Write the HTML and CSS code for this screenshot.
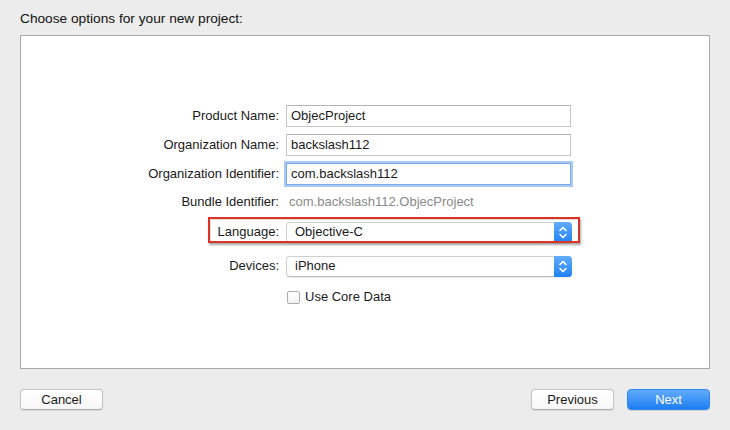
FILE: index.html
```html
<!DOCTYPE html>
<html>
<head>
<meta charset="utf-8">
<link rel="stylesheet" href="styles.css">
</head>
<body>
<div class="sheet">
  <div class="title">Choose options for your new project:</div>
  <div class="panel">
    <div class="form">
      <div class="row r-first">
        <div class="label">Product Name:</div>
        <div class="field">ObjecProject</div>
      </div>
      <div class="row r-text">
        <div class="label">Organization Name:</div>
        <div class="field">backslash112</div>
      </div>
      <div class="row r-text">
        <div class="label">Organization Identifier:</div>
        <div class="field focused">com.backslash112</div>
      </div>
      <div class="row r-bundle">
        <div class="label">Bundle Identifier:</div>
        <div class="static">com.backslash112.ObjecProject</div>
      </div>
      <div class="row r-lang highlight">
        <div class="label">Language:</div>
        <div class="popup">
          <span class="popup-text">Objective-C</span>
          <span class="stepper"><svg width="18" height="21" viewBox="0 0 18 21"><path d="M6 8.5 L9 5.5 L12 8.5" fill="none" stroke="#fff" stroke-width="1.6" stroke-linecap="round" stroke-linejoin="round"/><path d="M6 12.5 L9 15.5 L12 12.5" fill="none" stroke="#fff" stroke-width="1.6" stroke-linecap="round" stroke-linejoin="round"/></svg></span>
        </div>
      </div>
      <div class="row r-dev">
        <div class="label">Devices:</div>
        <div class="popup">
          <span class="popup-text">iPhone</span>
          <span class="stepper"><svg width="18" height="21" viewBox="0 0 18 21"><path d="M6 8.5 L9 5.5 L12 8.5" fill="none" stroke="#fff" stroke-width="1.6" stroke-linecap="round" stroke-linejoin="round"/><path d="M6 12.5 L9 15.5 L12 12.5" fill="none" stroke="#fff" stroke-width="1.6" stroke-linecap="round" stroke-linejoin="round"/></svg></span>
        </div>
      </div>
      <div class="row r-check">
        <div class="label"></div>
        <div class="check"><span class="box"></span><span>Use Core Data</span></div>
      </div>
    </div>
  </div>
  <div class="footer">
    <div class="btn">Cancel</div>
    <div class="right">
      <div class="btn">Previous</div>
      <div class="btn primary">Next</div>
    </div>
  </div>
</div>
</body>
</html>
```
FILE: styles.css
```css
html, body {
  margin: 0;
  padding: 0;
  background: #ececec;
}
body {
  width: 730px;
  height: 430px;
  overflow: hidden;
  font-family: "Liberation Sans", Arial, sans-serif;
  font-size: 13px;
  color: #1a1a1a;
}
.sheet {
  padding: 11px 20px 0 20px;
}
.title {
  font-size: 13.7px;
  line-height: 16px;
  height: 16px;
  margin-bottom: 8px;
  color: #111;
}
.panel {
  box-sizing: border-box;
  width: 690px;
  height: 334px;
  background: #fff;
  border: 1px solid #a9a9a9;
  padding-top: 69px;
}
.form {
  display: flex;
  flex-direction: column;
}
.row {
  display: grid;
  grid-template-columns: 258px 286px;
  column-gap: 7px;
  align-items: center;
  position: relative;
}
.label {
  text-align: right;
  color: #1a1a1a;
  line-height: 16px;
}
.r-first { height: 22px; }
.r-text { height: 22px; margin-top: 7px; }
.r-bundle { height: 18px; margin-top: 8px; }
.r-lang { height: 22px; margin-top: 10px; }
.r-dev { height: 22px; margin-top: 12px; }
.r-check { height: 14px; margin-top: 12px; }

.field {
  box-sizing: border-box;
  height: 22px;
  border: 1px solid #c6c6c6;
  border-top-color: #b5b5b5;
  background: #fff;
  padding: 0 4px;
  line-height: 20px;
  color: #1a1a1a;
  width: 285px;
}
.field.focused {
  border-color: #7aa8e4;
  box-shadow: 0 0 0 2px #a9c9f1;
}
.static {
  color: #8a8a8a;
  padding-left: 3px;
  line-height: 16px;
}
.popup {
  box-sizing: border-box;
  height: 21px;
  width: 286px;
  border: 1px solid #cfcfcf;
  border-bottom-color: #b9b9b9;
  border-radius: 4px;
  background: #fff;
  display: flex;
  align-items: center;
  justify-content: space-between;
  box-shadow: 0 0.5px 1px rgba(0,0,0,0.08);
}
.popup-text {
  padding-left: 8px;
  line-height: 16px;
  color: #1a1a1a;
}
.stepper {
  width: 18px;
  height: 21px;
  margin: -1px -1px -1px 0;
  border-radius: 0 4px 4px 0;
  background: linear-gradient(#63adfc, #1f80f3);
  display: flex;
}
.highlight::before {
  content: "";
  position: absolute;
  left: 187px;
  top: -4px;
  width: 368px;
  height: 22px;
  border: 2px solid #db3325;
  box-shadow: 1px 2px 2px rgba(0,0,0,0.35), inset 1px 1px 1px rgba(0,0,0,0.15);
  pointer-events: none;
}
.check {
  display: flex;
  align-items: center;
  gap: 5px;
  line-height: 16px;
}
.box {
  box-sizing: border-box;
  width: 13px;
  height: 13px;
  border: 1px solid #acacac;
  border-radius: 2px;
  background: linear-gradient(#ffffff, #f4f4f4);
  margin-left: 1px;
}
.footer {
  margin-top: 20px;
  display: flex;
  justify-content: space-between;
  align-items: center;
}
.right {
  display: flex;
  gap: 13px;
}
.btn {
  box-sizing: border-box;
  width: 83px;
  height: 21px;
  border: 1px solid #c3c3c3;
  border-bottom-color: #adadad;
  border-radius: 4px;
  background: linear-gradient(#ffffff, #f7f7f7);
  text-align: center;
  line-height: 19px;
  color: #1a1a1a;
  box-shadow: 0 0.5px 1px rgba(0,0,0,0.1);
}
.btn.primary {
  border-color: #2f86ee;
  background: linear-gradient(#62acfb, #1d7ef3);
  color: #fff;
}
```
